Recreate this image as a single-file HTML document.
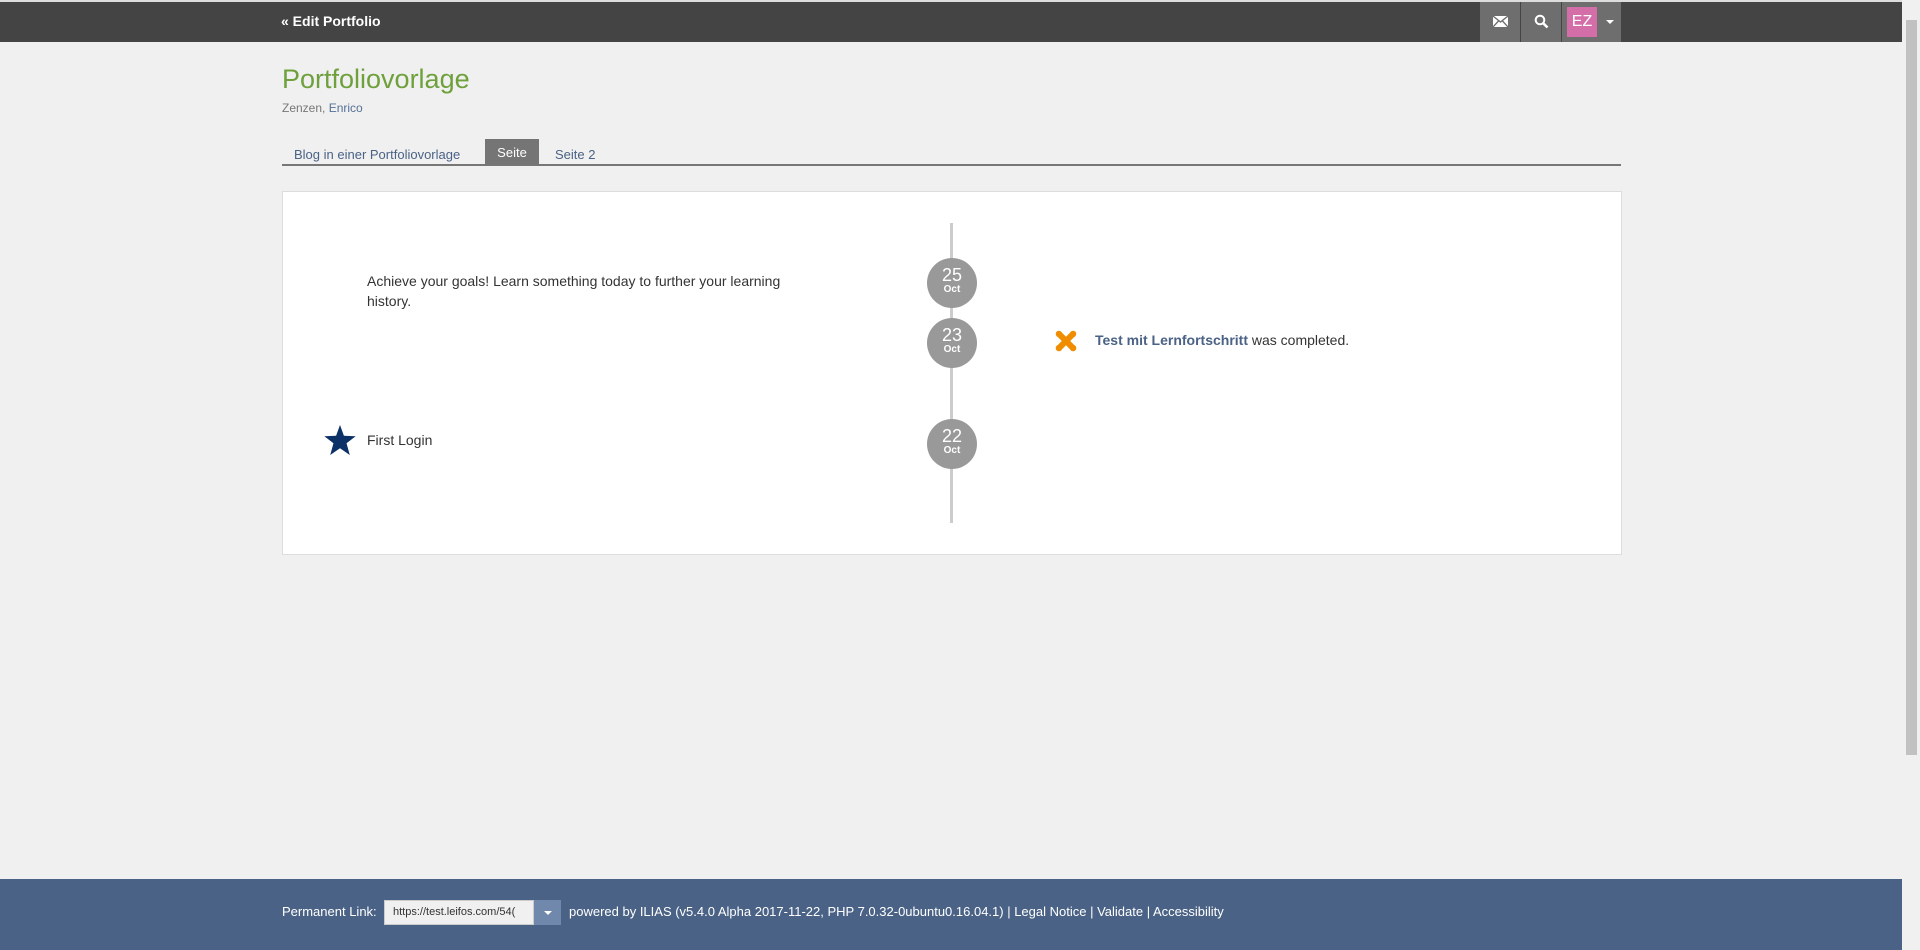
<!DOCTYPE html>
<html><head><meta charset="utf-8"><style>
*{margin:0;padding:0;box-sizing:border-box}
body{width:1920px;height:950px;overflow:hidden;background:#f0f0f0;font-family:"Liberation Sans",sans-serif;color:#333;position:relative}
.top{position:absolute;left:0;top:0;width:1902px;height:42px;background:#444;border-top:2px solid #ddd}
.a{position:absolute}
.sb{position:absolute;right:0;top:0;width:18px;height:950px;background:#f0f0f0}
.sb div{position:absolute;left:4px;top:20px;width:11px;height:735px;background:#c1c1c1}
.circ{position:absolute;left:927px;width:50px;height:50px;border-radius:50%;background:#999;color:#fff;text-align:center}
.circ b{display:block;font-weight:normal;font-size:18px;line-height:18px;margin-top:8px}
.circ i{display:block;font-style:normal;font-size:10px;font-weight:bold;line-height:12px}
</style></head><body>
<div class="top">
<div class="a" style="left:281px;top:11px;color:#fff;font-weight:bold;font-size:14px">« Edit Portfolio</div>
<div class="a" style="left:1480px;top:0;width:40px;height:40px;background:#6e6e6e">
<svg class="a" style="left:13px;top:14px" width="15" height="11" viewBox="0 0 15 11"><rect width="15" height="11" fill="#fff"/><path d="M0 0 L7.5 6 L15 0 M0 11 L5.5 5 M15 11 L9.5 5" stroke="#6e6e6e" stroke-width="1.3" fill="none"/></svg></div>
<div class="a" style="left:1521px;top:0;width:40px;height:40px;background:#6e6e6e">
<svg class="a" style="left:13px;top:12px" width="15" height="15" viewBox="0 0 15 15"><circle cx="6" cy="6" r="4.3" stroke="#fff" stroke-width="2" fill="none"/><path d="M9 9 L13.5 13.5" stroke="#fff" stroke-width="2.6"/></svg></div>
<div class="a" style="left:1562px;top:0;width:59px;height:40px;background:#6e6e6e">
<div class="a" style="left:5px;top:5px;width:30px;height:30px;background:#d36ea9;color:#fff;font-size:16px;text-align:center;line-height:30px">EZ</div>
<div class="a" style="left:44px;top:18px;width:0;height:0;border-left:4px solid transparent;border-right:4px solid transparent;border-top:4px solid #fff"></div></div>
</div>
<div class="a" style="left:282px;top:64px;font-size:27px;color:#6ea03c">Portfoliovorlage</div>
<div class="a" style="left:282px;top:101px;font-size:12px;color:#777">Zenzen, <span style="color:#557196">Enrico</span></div>
<div class="a" style="left:282px;top:164px;width:1339px;height:2px;background:#777"></div>
<div class="a" style="left:294px;top:147px;font-size:13px;color:#4a6285">Blog in einer Portfoliovorlage</div>
<div class="a" style="left:485px;top:139px;width:54px;height:26px;background:#757575;color:#fff;font-size:13px;text-align:center;line-height:28px">Seite</div>
<div class="a" style="left:555px;top:147px;font-size:13px;color:#4a6285">Seite 2</div>
<div class="a" style="left:282px;top:191px;width:1340px;height:364px;background:#fff;border:1px solid #ddd"></div>
<div class="a" style="left:950px;top:223px;width:3px;height:300px;background:#ccc"></div>
<div class="circ" style="top:258px"><b>25</b><i>Oct</i></div>
<div class="circ" style="top:318px"><b>23</b><i>Oct</i></div>
<div class="circ" style="top:419px"><b>22</b><i>Oct</i></div>
<div class="a" style="left:367px;top:271px;width:445px;font-size:14px;line-height:20px">Achieve your goals! Learn something today to further your learning history.</div>
<svg class="a" style="left:324px;top:425px" width="32" height="30" viewBox="0 0 24 23"><path d="M12 0 L15 8.2 L24 8.6 L17 14 L19.5 23 L12 17.8 L4.5 23 L7 14 L0 8.6 L9 8.2 Z" fill="#0c3166"/></svg>
<div class="a" style="left:367px;top:432px;font-size:14px">First Login</div>
<svg class="a" style="left:1053px;top:328px" width="26" height="26" viewBox="0 0 26 26"><g transform="rotate(45 13 13)" fill="#f08c00"><rect x="10" y="3" width="6" height="20"/><rect x="3" y="10" width="20" height="6"/><circle cx="13" cy="3" r="3.2"/><circle cx="13" cy="23" r="3.2"/><circle cx="3" cy="13" r="3.2"/><circle cx="23" cy="13" r="3.2"/></g></svg>
<div class="a" style="left:1095px;top:332px;font-size:14px"><b style="color:#4a6285">Test mit Lernfortschritt</b> was completed.</div>
<div class="a" style="left:0;top:879px;width:1902px;height:71px;background:#4a6285"></div>
<div class="a" style="left:282px;top:904px;font-size:13px;color:#fff">Permanent Link:</div>
<div class="a" style="left:384px;top:900px;width:150px;height:25px;background:#f0f0f0;border:1px solid #ccc;font-size:11px;line-height:23px;padding-left:8px;overflow:hidden;white-space:nowrap">https://test.leifos.com/54(</div>
<div class="a" style="left:534px;top:900px;width:27px;height:25px;background:#6f88ab"><div class="a" style="left:10px;top:11px;border-left:4px solid transparent;border-right:4px solid transparent;border-top:4px solid #fff"></div></div>
<div class="a" style="left:569px;top:904px;font-size:13px;color:#fff">powered by ILIAS (v5.4.0 Alpha 2017-11-22, PHP 7.0.32-0ubuntu0.16.04.1) | Legal Notice | Validate | Accessibility</div>
<div class="sb"><div></div></div>
</body></html>
